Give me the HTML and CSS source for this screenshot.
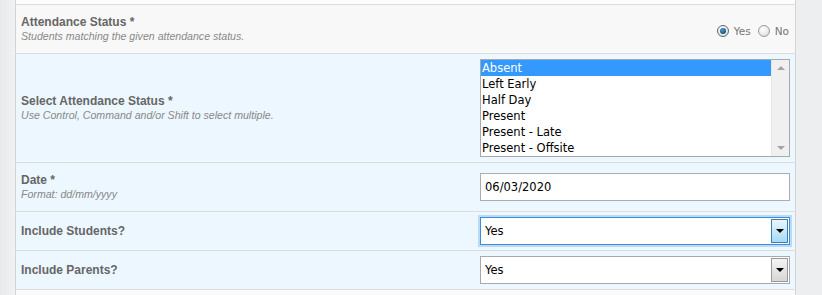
FILE: index.html
```html
<!DOCTYPE html>
<html lang="en">
<head>
<meta charset="UTF-8" />
<title>Attendance Report</title>
<link rel="stylesheet" href="styles.css">
</head>
<body>

<div class="page">
  <table class="form-table">
    <tr class="row-top"><td colspan="2"></td></tr>

    <tr class="row-light row-48">
      <td class="label-cell">
        <div class="label">Attendance Status *</div>
        <div class="hint">Students matching the given attendance status.</div>
      </td>
      <td class="input-cell">
        <div class="radios">
          <label class="radio"><span class="dot checked"></span>Yes</label>
          <label class="radio"><span class="dot"></span>No</label>
        </div>
      </td>
    </tr>

    <tr class="row-blue">
      <td class="label-cell">
        <div class="label">Select Attendance Status *</div>
        <div class="hint">Use Control, Command and/or Shift to select multiple.</div>
      </td>
      <td class="input-cell">
        <div class="listbox">
          <div class="options">
            <div class="option selected">Absent</div>
            <div class="option">Left Early</div>
            <div class="option">Half Day</div>
            <div class="option">Present</div>
            <div class="option">Present - Late</div>
            <div class="option">Present - Offsite</div>
          </div>
          <div class="scrollbar">
            <span class="arrow up"></span>
            <span class="arrow down"></span>
          </div>
        </div>
      </td>
    </tr>

    <tr class="row-blue row-48">
      <td class="label-cell">
        <div class="label">Date *</div>
        <div class="hint">Format: dd/mm/yyyy</div>
      </td>
      <td class="input-cell">
        <div class="textbox">06/03/2020</div>
      </td>
    </tr>

    <tr class="row-blue row-38">
      <td class="label-cell">
        <div class="label">Include Students?</div>
      </td>
      <td class="input-cell">
        <div class="dropdown focused">
          <span class="value">Yes</span>
          <span class="drop-btn"><span class="caret"></span></span>
        </div>
      </td>
    </tr>

    <tr class="row-blue row-38">
      <td class="label-cell">
        <div class="label">Include Parents?</div>
      </td>
      <td class="input-cell">
        <div class="dropdown">
          <span class="value">Yes</span>
          <span class="drop-btn"><span class="caret"></span></span>
        </div>
      </td>
    </tr>

    <tr class="row-bottom"><td colspan="2"></td></tr>
  </table>
</div>

</body>
</html>
```

FILE: styles.css
```css
body {
  margin: 0;
  background: linear-gradient(90deg, #e9eaeb 0%, #f1f2f3 2%, #eceeef 100%);
  font-family: "Liberation Sans", Arial, sans-serif;
  height: 295px;
  overflow: hidden;
}

.page {
  padding-left: 15px;
}

.form-table {
  width: 781px;
  border-collapse: collapse;
  border-left: 1px solid #d4d4d4;
  border-right: 1px solid #d4d4d4;
  background: #fafafa;
}

.form-table td {
  border-bottom: 1px solid #dcdcdc;
  padding: 0;
  vertical-align: middle;
}

.row-top td {
  height: 4px;
  background: #fdfdfd;
}

.row-bottom td {
  height: 8px;
  border-bottom: none;
  background: #fafafa;
}

.row-light td {
  background: #f8f8f8;
}

.row-blue td {
  background: #edf7ff;
}

.row-48 td {
  height: 48px;
}

.row-38 td {
  height: 38px;
}

.label-cell {
  padding-left: 5px !important;
}

.label {
  font-size: 12px;
  font-weight: bold;
  color: #666;
  line-height: 14px;
}

.hint {
  font-size: 10.6px;
  font-style: italic;
  color: #888;
  line-height: 13px;
  margin-top: 1px;
}

.input-cell {
  width: 310px;
  padding-right: 5px !important;
}

/* radio buttons */
.radios {
  display: flex;
  justify-content: flex-end;
  gap: 7px;
  padding-top: 3px;
  padding-right: 1px;
}

.radio {
  display: flex;
  align-items: center;
  gap: 5px;
  font-size: 10.5px;
  color: #777;
  font-family: "DejaVu Sans", Verdana, sans-serif;
}

.dot {
  width: 10px;
  height: 10px;
  border-radius: 50%;
  border: 1px solid #9a9a9a;
  background: radial-gradient(circle at 40% 35%, #fff 0%, #e3e3e3 70%, #cfcfcf 100%);
  position: relative;
}

.dot.checked {
  border-color: #5b6a73;
}

.dot.checked::after {
  content: "";
  position: absolute;
  left: 2px;
  top: 2px;
  width: 6px;
  height: 6px;
  border-radius: 50%;
  background: radial-gradient(circle at 40% 35%, #4aa0cf 0%, #1b5f86 60%, #0f3a52 100%);
}

/* multi select */
.listbox {
  display: flex;
  width: 308px;
  height: 96px;
  border: 1px solid #a9a9a9;
  background: #fff;
  margin: 5px 0 5px;
}

.options {
  flex: 1;
  font-family: "DejaVu Sans", Tahoma, sans-serif;
  font-size: 11.5px;
  color: #000;
}

.option {
  height: 16px;
  line-height: 16px;
  padding-left: 1px;
  white-space: nowrap;
}

.option.selected {
  background: #3399ff;
  color: #fff;
}

.scrollbar {
  width: 17px;
  background: #f0f0f0;
  border-left: 1px solid #e6e6e6;
  display: flex;
  flex-direction: column;
  justify-content: space-between;
  align-items: center;
  padding: 6px 0;
}

.arrow {
  width: 0;
  height: 0;
  border-left: 4px solid transparent;
  border-right: 4px solid transparent;
}

.arrow.up {
  border-bottom: 4px solid #a3a3a3;
}

.arrow.down {
  border-top: 4px solid #a3a3a3;
}

/* text input */
.textbox {
  width: 304px;
  height: 26px;
  line-height: 26px;
  border: 1px solid #abadb3;
  background: #fff;
  padding-left: 4px;
  font-family: "DejaVu Sans", Tahoma, sans-serif;
  font-size: 11.5px;
  color: #000;
}

/* dropdowns */
.dropdown {
  display: flex;
  width: 308px;
  height: 26px;
  border: 1px solid #a9a9a9;
  background: #fff;
  font-family: "DejaVu Sans", Tahoma, sans-serif;
  font-size: 11.5px;
  color: #000;
}

.dropdown.focused {
  border-color: #3c8ddb;
  box-shadow: 0 0 0 2px #b9dbf5;
}

.value {
  flex: 1;
  line-height: 26px;
  padding-left: 4px;
}

.drop-btn {
  width: 15px;
  margin: 1px;
  border: 1px solid #999;
  background: linear-gradient(#f4f4f4, #d6d6d6);
  display: flex;
  align-items: center;
  justify-content: center;
}

.focused .drop-btn {
  border-color: #3c7fb1;
  background: linear-gradient(#eaf6fd, #a7d9f5);
}

.caret {
  width: 0;
  height: 0;
  border-left: 4px solid transparent;
  border-right: 4px solid transparent;
  border-top: 4px solid #000;
}
```
